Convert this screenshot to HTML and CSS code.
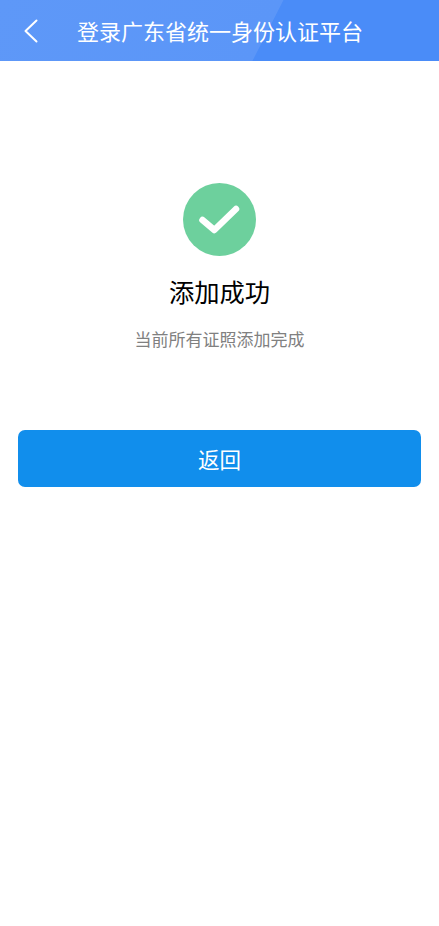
FILE: index.html
```html
<!DOCTYPE html>
<html lang="zh-CN">
<head>
<meta charset="utf-8">
<title>登录广东省统一身份认证平台</title>
<link rel="stylesheet" href="styles.css">
</head>
<body>
<header class="topbar">
  <svg class="back" width="16" height="26" viewBox="0 0 16 26" aria-hidden="true"><path d="M13.5 2.5 L2.5 13 L13.5 23.5" fill="none" stroke="#fff" stroke-width="2" stroke-linecap="round" stroke-linejoin="round"/></svg>
  <h1 class="title">登录广东省统一身份认证平台</h1>
</header>
<main class="content">
  <svg class="check" width="73" height="73" viewBox="0 0 73 73" aria-hidden="true"><circle cx="36.5" cy="36.5" r="36.5" fill="#6dd09d"/><path d="M19.5 37 L31.3 47 L53 26" fill="none" stroke="#fff" stroke-width="6.5" stroke-linecap="round" stroke-linejoin="round"/></svg>
  <h2 class="heading">添加成功</h2>
  <p class="desc">当前所有证照添加完成</p>
  <button class="btn" type="button">返回</button>
</main>
</body>
</html>
```
FILE: styles.css
```css
html, body { margin: 0; padding: 0; background: #fff; }
body { font-family: "Noto Sans CJK SC", "Liberation Sans", sans-serif; height: 926px; overflow: hidden; }
.topbar {
  height: 61px; display: flex; align-items: center; padding-left: 23px; box-sizing: border-box;
  background: linear-gradient(117deg, #5e98f8 0, #5b96f8 60.2%, #4a8cf8 60.4%, #4a8cf8 100%);
}
.back { flex: none; }
.title { margin: 0 0 0 38px; font-size: 22px; line-height: 61px; font-weight: 400; color: #fff; white-space: nowrap; }
.content { display: flex; flex-direction: column; align-items: center; padding: 122px 18px 0; }
.check { display: block; }
.heading { margin: 18px 0 0; font-size: 25.3px; line-height: 34px; font-weight: 400; color: #000; }
.desc { margin: 19px 0 0; font-size: 17px; line-height: 24px; color: #808080; }
.btn {
  margin-top: 79px; width: 403px; height: 57px; border: 0; border-radius: 7px; background: #118eec;
  color: #fff; font: inherit; font-size: 21.5px;
}
```
